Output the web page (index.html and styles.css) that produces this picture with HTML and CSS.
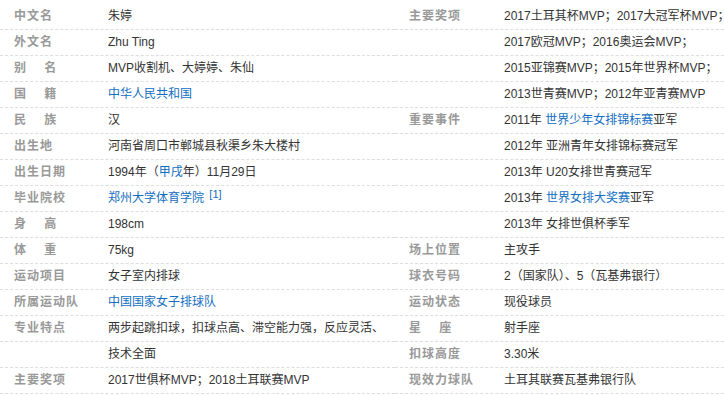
FILE: index.html
```html
<!DOCTYPE html>
<html lang="zh-CN">
<head>
<meta charset="utf-8">
<title>朱婷</title>
<link rel="stylesheet" href="styles.css">
</head>
<body>
<div class="basic-info">
  <dl class="info-col info-left">
    <div class="row"><dt>中文名</dt><dd>朱婷</dd></div>
    <div class="row"><dt>外文名</dt><dd>Zhu Ting</dd></div>
    <div class="row"><dt>别&nbsp;&nbsp;&nbsp;&nbsp;名</dt><dd>MVP收割机、大婷婷、朱仙</dd></div>
    <div class="row"><dt>国&nbsp;&nbsp;&nbsp;&nbsp;籍</dt><dd><a href="#">中华人民共和国</a></dd></div>
    <div class="row"><dt>民&nbsp;&nbsp;&nbsp;&nbsp;族</dt><dd>汉</dd></div>
    <div class="row"><dt>出生地</dt><dd>河南省周口市郸城县秋渠乡朱大楼村</dd></div>
    <div class="row"><dt>出生日期</dt><dd>1994年（<a href="#">甲戌</a>年）11月29日</dd></div>
    <div class="row"><dt>毕业院校</dt><dd><a href="#">郑州大学体育学院</a> <sup class="ref">[1]</sup></dd></div>
    <div class="row"><dt>身&nbsp;&nbsp;&nbsp;&nbsp;高</dt><dd>198cm</dd></div>
    <div class="row"><dt>体&nbsp;&nbsp;&nbsp;&nbsp;重</dt><dd>75kg</dd></div>
    <div class="row"><dt>运动项目</dt><dd>女子室内排球</dd></div>
    <div class="row"><dt>所属运动队</dt><dd><a href="#">中国国家女子排球队</a></dd></div>
    <div class="row"><dt>专业特点</dt><dd>两步起跳扣球，扣球点高、滞空能力强，反应灵活、</dd></div>
    <div class="row"><dt></dt><dd>技术全面</dd></div>
    <div class="row"><dt>主要奖项</dt><dd>2017世俱杯MVP；2018土耳联赛MVP</dd></div>
  </dl>
  <dl class="info-col info-right">
    <div class="row"><dt>主要奖项</dt><dd>2017土耳其杯MVP；2017大冠军杯MVP；</dd></div>
    <div class="row"><dt></dt><dd>2017欧冠MVP；2016奥运会MVP；</dd></div>
    <div class="row"><dt></dt><dd>2015亚锦赛MVP；2015年世界杯MVP；</dd></div>
    <div class="row"><dt></dt><dd>2013世青赛MVP；2012年亚青赛MVP</dd></div>
    <div class="row"><dt>重要事件</dt><dd>2011年 <a href="#">世界少年女排锦标赛</a>亚军</dd></div>
    <div class="row"><dt></dt><dd>2012年 亚洲青年女排锦标赛冠军</dd></div>
    <div class="row"><dt></dt><dd>2013年 U20女排世青赛冠军</dd></div>
    <div class="row"><dt></dt><dd>2013年 <a href="#">世界女排大奖赛</a>亚军</dd></div>
    <div class="row"><dt></dt><dd>2013年 女排世俱杯季军</dd></div>
    <div class="row"><dt>场上位置</dt><dd>主攻手</dd></div>
    <div class="row"><dt>球衣号码</dt><dd>2（国家队）、5（瓦基弗银行）</dd></div>
    <div class="row"><dt>运动状态</dt><dd>现役球员</dd></div>
    <div class="row"><dt>星&nbsp;&nbsp;&nbsp;&nbsp;座</dt><dd>射手座</dd></div>
    <div class="row"><dt>扣球高度</dt><dd>3.30米</dd></div>
    <div class="row"><dt>现效力球队</dt><dd>土耳其联赛瓦基弗银行队</dd></div>
  </dl>
</div>
</body>
</html>
```
FILE: styles.css
```css
html, body {
  margin: 0;
  padding: 0;
  background: #fff;
  overflow: hidden;
}

body {
  font-family: "Liberation Sans", Arial, "Noto Sans CJK SC", sans-serif;
  font-size: 12px;
  color: #333;
}

.basic-info {
  display: grid;
  grid-template-columns: 395px 1fr;
  padding-top: 4px;
  width: 724px;
}

.info-col {
  margin: 0;
  min-width: 0;
}

.row {
  display: flex;
  height: 25px;
  line-height: 25px;
  border-bottom: 1px dashed #dedede;
  white-space: nowrap;
}

.row dt {
  flex: 0 0 auto;
  width: 94px;
  padding-left: 14px;
  font-weight: bold;
  font-size: 12px;
  letter-spacing: 1px;
  color: #999;
  overflow: hidden;
}

.info-right .row dt {
  width: 95px;
}

.row dd {
  margin: 0;
  flex: 1 1 auto;
  overflow: hidden;
  color: #333;
}

a {
  color: #136ec2;
  text-decoration: none;
}

.ref {
  font-size: 11px;
  color: #136ec2;
  vertical-align: 4px;
  line-height: 0;
  margin-left: 2px;
}
```
